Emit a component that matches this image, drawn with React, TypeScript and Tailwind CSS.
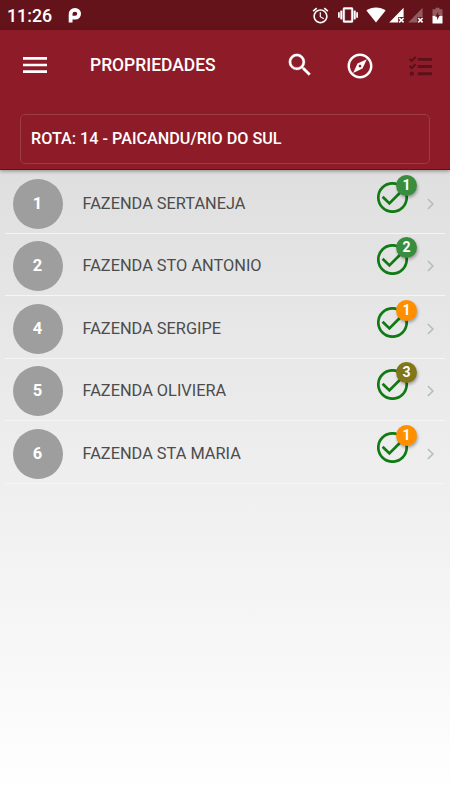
import { FaTasks } from 'react-icons/fa';

interface Property {
  id: number;
  name: string;
  count: number;
  badgeClass: string;
}

const PROPERTIES: Property[] = [
  { id: 1, name: 'FAZENDA SERTANEJA', count: 1, badgeClass: 'bg-[#388e3c]' },
  { id: 2, name: 'FAZENDA STO ANTONIO', count: 2, badgeClass: 'bg-[#388e3c]' },
  { id: 4, name: 'FAZENDA SERGIPE', count: 1, badgeClass: 'bg-[#ff8f00]' },
  { id: 5, name: 'FAZENDA OLIVIERA', count: 3, badgeClass: 'bg-[#827717]' },
  { id: 6, name: 'FAZENDA STA MARIA', count: 1, badgeClass: 'bg-[#ff8f00]' },
];

function AppLogo() {
  return (
    <svg className="ml-[15.5px] h-4 w-[14px]" viewBox="0 0 14 16" fill="none">
      <path
        d="M2.6 15.6V7.4C2.6 4.6 4.4 2.8 7 2.8S11.1 4.6 11.1 6.8 9.5 10.7 7.2 10.7H4"
        stroke="#fff"
        strokeWidth="3.8"
        strokeLinejoin="round"
      />
    </svg>
  );
}

function AlarmIcon() {
  return (
    <svg className="h-[19px] w-[19px]" viewBox="0 0 24 24" fill="#fff">
      <path d="M22 5.72l-4.6-3.86-1.29 1.53 4.6 3.86L22 5.72zM7.88 3.39L6.6 1.86 2 5.71l1.29 1.53 4.59-3.85zM12.5 8H11v6l4.75 2.85.75-1.23-4-2.37V8zM12 4c-4.97 0-9 4.03-9 9s4.02 9 9 9 9-4.03 9-9-4.03-9-9-9zm0 16c-3.87 0-7-3.13-7-7s3.13-7 7-7 7 3.13 7 7-3.13 7-7 7z" />
    </svg>
  );
}

function VibrationIcon() {
  return (
    <svg
      className="ml-[8px] h-5 w-5"
      viewBox="0 0 24 24"
      fill="#fff"
      stroke="#fff"
      strokeWidth="0.5"
    >
      <path d="M0 15h2V9H0v6zm3 2h2V7H3v10zm19-8v6h2V9h-2zm-3 8h2V7h-2v10zM16.5 3h-9C6.67 3 6 3.67 6 4.5v15c0 .83.67 1.5 1.5 1.5h9c.83 0 1.5-.67 1.5-1.5v-15c0-.83-.67-1.5-1.5-1.5zM16 19H8V5h8v14z" />
    </svg>
  );
}

function WifiIcon() {
  return (
    <svg className="ml-[8.5px] h-4 w-[20px]" viewBox="0 0 20 16" fill="#fff">
      <path d="M10 15.5.4 3.6C3 1.7 6.3.5 10 .5s7 1.2 9.6 3.1z" />
    </svg>
  );
}

function SignalIcon({ faded }: { faded?: boolean }) {
  return (
    <svg className="ml-[3px] h-4 w-4" viewBox="0 0 16 16">
      <path d="M.3 15.5 14.6.7v9.3H9.2v5.5z" fill="#fff" fillOpacity={faded ? 0.3 : 1} />
      <path d="m10.2 11 4.4 4.4m0-4.4-4.4 4.4" stroke="#fff" strokeWidth="1.6" />
    </svg>
  );
}

function BatteryIcon() {
  return (
    <svg className="ml-[7.5px] h-[17px] w-[11px]" viewBox="0 0 11 17">
      <path d="M.5 2.3h3V.7h4v1.6h3V9H.5z" fill="#fff" fillOpacity="0.3" />
      <path d="M.5 8.9h10v7.6H.5z" fill="#fff" />
      <path d="M6.2 4.8 3.2 9.7h1.9v3.4l2.9-5H6.2z" fill="#65131b" />
    </svg>
  );
}

function StatusBar() {
  return (
    <div className="flex h-[30px] items-center bg-[#65131b] pr-[7.5px] pl-[7px] text-white">
      <span className="pt-px text-[17.8px] leading-none font-medium">11:26</span>
      <AppLogo />
      <div className="ml-auto flex items-center">
        <AlarmIcon />
        <VibrationIcon />
        <WifiIcon />
        <SignalIcon />
        <SignalIcon faded />
        <BatteryIcon />
      </div>
    </div>
  );
}

function Toolbar() {
  return (
    <div className="flex h-[70px] items-center pr-[18px] pl-[19px]">
      <svg className="h-8 w-8" viewBox="0 0 24 24" fill="#fff">
        <path d="M3 18h18v-2H3v2zm0-5h18v-2H3v2zm0-7v2h18V6H3z" />
      </svg>
      <h1 className="ml-[39px] text-[17.45px] font-medium text-white">PROPRIEDADES</h1>
      <div className="ml-auto flex items-center">
        <svg
          className="h-[30px] w-[30px]"
          viewBox="0 0 24 24"
          fill="#fff"
          stroke="#fff"
          strokeWidth="0.2"
        >
          <path d="M15.5 14h-.79l-.28-.27A6.47 6.47 0 0 0 16 9.5 6.5 6.5 0 1 0 9.5 16c1.61 0 3.09-.59 4.23-1.57l.27.28v.79l5 4.99L20.49 19l-4.99-5zm-6 0C7.01 14 5 11.99 5 9.5S7.01 5 9.5 5 14 7.01 14 9.5 11.99 14 9.5 14z" />
        </svg>
        <svg className="mt-px ml-[30px] h-[30px] w-[30px]" viewBox="0 0 24 24" fill="#fff">
          <path d="M12 2C6.48 2 2 6.48 2 12s4.48 10 10 10 10-4.48 10-10S17.52 2 12 2zm0 18c-4.41 0-8-3.59-8-8s3.59-8 8-8 8 3.59 8 8-3.59 8-8 8zm-5.5-2.5l7.51-3.49L17.5 6.5 9.99 9.99 6.5 17.5zm5.5-6.6c.61 0 1.1.49 1.1 1.1s-.49 1.1-1.1 1.1-1.1-.49-1.1-1.1.49-1.1 1.1-1.1z" />
        </svg>
        <FaTasks className="mt-[2px] ml-[34px] h-[23px] w-[23px] text-[#5b111a]" />
      </div>
    </div>
  );
}

function PropertyRow({ property }: { property: Property }) {
  return (
    <li className="mx-[5px] flex h-[62.5px] items-center border-b border-[#f5f5f5] pt-[4px] pr-[11px] pl-[7.5px]">
      <div className="flex h-[50px] w-[50px] items-center justify-center rounded-full bg-[#9e9e9e] pt-px text-[16.5px] font-bold text-white">
        {property.id}
      </div>
      <span className="mt-px ml-[20px] text-[16.35px] text-[#4c4c4c]">{property.name}</span>
      <div className="relative mr-[19px] mb-[13px] ml-auto h-[31px] w-[31px]">
        <svg className="h-full w-full" viewBox="0 0 31 31" fill="none" stroke="#117a14">
          <circle cx="15.5" cy="15.5" r="14.2" strokeWidth="2.7" />
          <path d="m5.6 14.7 6.8 6.7L24 9.8" strokeWidth="2.8" />
        </svg>
        <span
          className={`absolute -top-[7px] left-[19px] flex h-[21px] w-[21px] items-center justify-center rounded-full text-[14px] font-bold text-white shadow-[1px_2px_3px_rgba(0,0,0,0.3)] ${property.badgeClass}`}
        >
          {property.count}
        </span>
      </div>
      <svg className="h-3 w-[7px]" viewBox="0 0 7 12" fill="none">
        <path d="m.9 1 5 5-5 5" stroke="#b4bec1" strokeWidth="1.7" />
      </svg>
    </li>
  );
}

export default function App() {
  return (
    <div className="flex h-[800px] w-[450px] flex-col overflow-hidden bg-white font-['Roboto',sans-serif]">
      <StatusBar />
      <header className="z-10 h-[140px] shrink-0 border-b border-[#8b0000] bg-[#8e1b28] shadow-[0_1px_4px_rgba(0,0,0,0.4)]">
        <Toolbar />
        <div className="mx-[20px] mt-[14px] flex h-[50px] items-center rounded-[5px] border border-[#9c3c47] px-[10px] pt-px text-[16.2px] font-medium text-white">
          ROTA: 14 - PAICANDU/RIO DO SUL
        </div>
      </header>
      <ul className="flex-1 bg-linear-to-b from-[#dfdfdf] to-white pt-[1px]">
        {PROPERTIES.map((property) => (
          <PropertyRow key={property.id} property={property} />
        ))}
      </ul>
    </div>
  );
}
